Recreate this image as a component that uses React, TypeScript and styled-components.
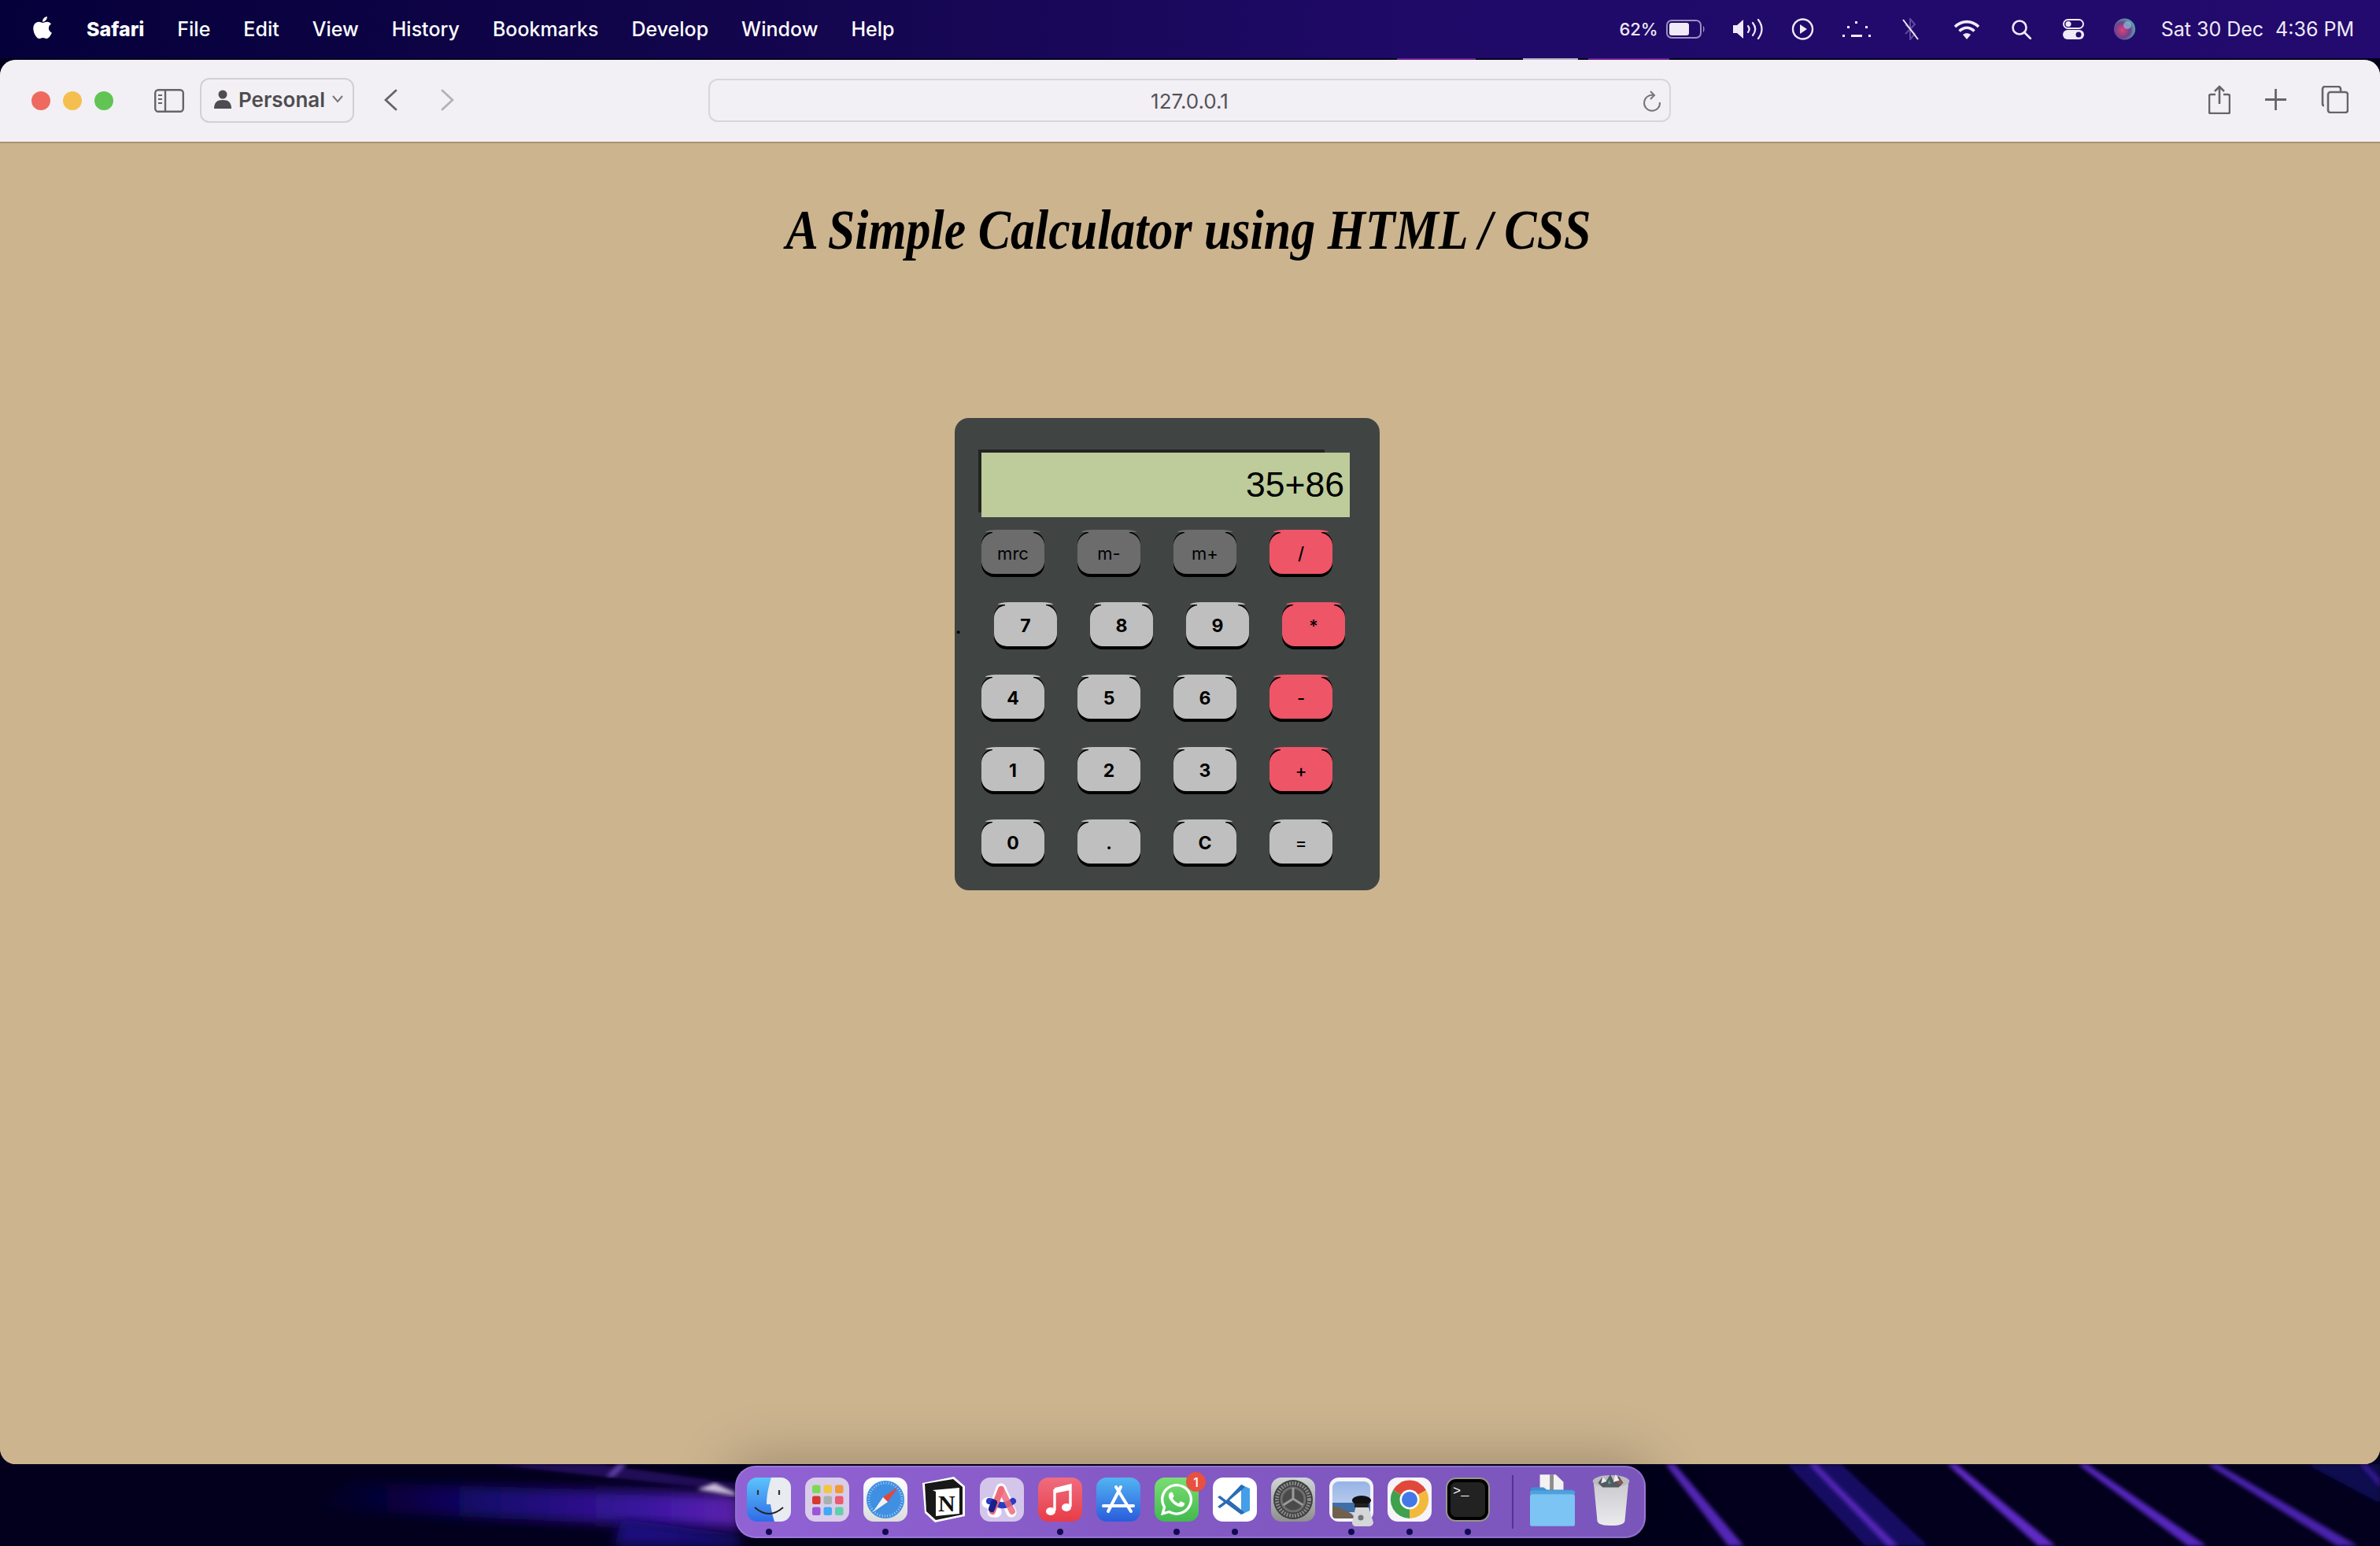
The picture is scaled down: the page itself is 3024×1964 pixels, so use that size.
import React from 'react';
import styled, {createGlobalStyle} from 'styled-components';
import {FaApple, FaWhatsapp} from 'react-icons/fa';

const GlobalStyle = createGlobalStyle`
    html, body{
        margin:0;
        padding:0;
        background:#02001e;
    }
`;

const Desktop = styled.div`
    position:relative;
    width:3024px;
    height:1964px;
    overflow:hidden;
    display:flex;
    flex-direction:column;
    font-family:Inter, "Liberation Sans", sans-serif;
`;

const Wallpaper = styled.svg`
    position:absolute;
    left:0;
    top:0;
`;

const MenuBar = styled.header`
    position:relative;
    height:74px;
    flex:none;
    display:flex;
    align-items:center;
    justify-content:space-between;
    padding:0 33px 0 38px;
    background:linear-gradient(90deg, #05003a 0%, #14064f 35%, #1f0a68 60%, #230a6e 100%);
    color:#fff;
    font-size:25px;
`;

const MenuLeft = styled.nav`
    display:flex;
    align-items:center;
    gap:42px;
    font-weight:500;
`;

const AppName = styled.b`
    font-weight:800;
    margin-left:-2px;
`;

const MenuRight = styled.div`
    display:flex;
    align-items:center;
    gap:38px;
    color:#efeaf6;
`;

const StatusSlot = styled.span<{$nudge:number}>`
    display:flex;
    margin-left:${(props) => props.$nudge}px;
`;

const BatteryGroup = styled.div`
    display:flex;
    align-items:center;
    gap:10px;
    font-size:22px;
    font-weight:500;
`;

const Clock = styled.div`
    display:flex;
    gap:15px;
    font-size:25px;
    margin-left:-5px;
`;

const BrowserWindow = styled.main`
    position:relative;
    flex:none;
    margin-top:2px;
    height:1784px;
    border-radius:20px;
    overflow:hidden;
    display:flex;
    flex-direction:column;
    background:#ccb48f;
`;

const Toolbar = styled.div`
    height:104px;
    flex:none;
    display:flex;
    align-items:center;
    padding:0 40px 0 40px;
    background:#f2f0f5;
    border-bottom:2px solid #a8916e;
`;

const Lights = styled.div`
    display:flex;
    gap:16px;
    margin-right:52px;
`;

const Light = styled.span<{$color:string}>`
    width:24px;
    height:24px;
    border-radius:50%;
    background:${(props) => props.$color};
`;

const ProfileButton = styled.div`
    box-sizing:border-box;
    width:196px;
    height:57px;
    margin:-2px 0 0 20px;
    display:flex;
    align-items:center;
    padding:0 0 2px 16px;
    gap:9px;
    border:2px solid #d2d0d4;
    border-radius:12px;
    font-size:26px;
    font-weight:600;
    color:#4e4c50;
`;

const NavButtons = styled.div`
    display:flex;
    gap:55px;
    margin:-2px 0 0 38px;
`;

const AddressBar = styled.div`
    position:absolute;
    left:900px;
    top:24px;
    box-sizing:border-box;
    width:1223px;
    height:55px;
    padding-top:2px;
    display:flex;
    align-items:center;
    justify-content:center;
    border:2px solid #d8d6da;
    border-radius:12px;
    font-size:26px;
    color:#555357;
`;

const ReloadSlot = styled.span`
    position:absolute;
    right:10px;
    top:13px;
    display:flex;
`;

const ToolbarRight = styled.div`
    margin:-4px 0 0 auto;
    display:flex;
    align-items:center;
    gap:44px;
`;

const Page = styled.section`
    flex:1;
    background:#ccb48f;
`;

const Title = styled.h1`
    margin:70px 0 0;
    height:100px;
    text-align:center;
    font-family:"Liberation Serif", serif;
    font-style:italic;
    font-weight:700;
    font-size:72px;
    line-height:80px;
    color:#000;
    transform:translateX(-2px) scaleX(0.86);
`;

const Calculator = styled.div`
    position:relative;
    z-index:0;
    box-sizing:border-box;
    width:540px;
    height:600px;
    margin:179px 0 0 1213px;
    padding:44px 0 0 34px;
    border-radius:18px;
    background:#404544;
`;

const Display = styled.div`
    position:relative;
    box-sizing:border-box;
    width:468px;
    height:82px;
    padding-right:7px;
    display:flex;
    align-items:center;
    justify-content:flex-end;
    background:#bdcc9a;
    font-family:"Liberation Sans", Arial, sans-serif;
    font-size:44.5px;
    color:#000;

    &::before{
        content:"";
        position:absolute;
        z-index:-1;
        left:-4px;
        top:-4px;
        width:440px;
        height:80px;
        background:#222423;
    }
`;

const Keypad = styled.div`
    margin-top:20px;
    display:flex;
    flex-direction:column;
    gap:40px;
`;

const KeyRow = styled.div<{$shifted?:boolean}>`
    position:relative;
    display:flex;
    gap:42px;
    padding-left:${(props) => (props.$shifted ? '16px' : '0')};
`;

const StrayDot = styled.span`
    position:absolute;
    left:-33px;
    top:15px;
    font-size:22px;
    line-height:26px;
    font-weight:700;
    color:#000;
`;

const toneColors = {
    num:'#bfbfbf',
    mem:'#6c6c6c',
    op:'#ee5567',
    eq:'#bfbfbf',
};

type Tone = keyof typeof toneColors;

const Key = styled.button<{$tone:Tone}>`
    position:relative;
    width:80px;
    height:52px;
    padding:0;
    border:none;
    border-radius:16px;
    background:${(props) => toneColors[props.$tone]};
    box-shadow:0 4px 0 #000, 0 -2px 0 #000;
    font-family:Inter, "Liberation Sans", sans-serif;
    font-size:${(props) => (props.$tone === 'num' ? '23px' : '22px')};
    font-weight:${(props) => (props.$tone === 'num' ? 700 : props.$tone === 'mem' ? 400 : 500)};
    color:#000;

    &::before{
        content:"";
        position:absolute;
        left:14px;
        right:14px;
        top:-2px;
        height:3px;
        background:${(props) => toneColors[props.$tone]};
    }

    &::after{
        content:"";
        position:absolute;
        left:5px;
        right:5px;
        top:-4px;
        height:3px;
        border-radius:14px 14px 0 0 / 3px 3px 0 0;
        background:${(props) => toneColors[props.$tone]};
    }
`;

const DockZone = styled.footer`
    position:relative;
    z-index:2;
    flex:1;
    padding:2px 0 0 934px;
`;

const Dock = styled.div`
    box-sizing:border-box;
    width:1157px;
    height:92px;
    display:flex;
    padding:13px 0 0 13px;
    gap:18px;
    border:2px solid rgba(190,160,235,.35);
    border-radius:26px;
    background:linear-gradient(90deg, #9162d4 0%, #8459c4 45%, #7a56bb 100%);
    box-shadow:0 0 70px 10px rgba(0,0,0,.22);
`;

const DockItem = styled.div<{$width?:number}>`
    position:relative;
    width:${(props) => props.$width ?? 56}px;
    height:56px;
    flex:none;
`;

const RunningDot = styled.span`
    position:absolute;
    left:24px;
    top:65px;
    width:8px;
    height:8px;
    border-radius:50%;
    background:#120a50;
`;

const Badge = styled.span`
    position:absolute;
    right:-9px;
    top:-7px;
    width:25px;
    height:25px;
    display:flex;
    align-items:center;
    justify-content:center;
    border-radius:50%;
    background:#e8503f;
    color:#fff;
    font-size:16px;
    font-weight:500;
`;

const WhatsappTile = styled.div`
    width:56px;
    height:56px;
    display:flex;
    align-items:center;
    justify-content:center;
    border-radius:13px;
    background:linear-gradient(180deg, #7ade72, #42b94e);
    color:#fff;
`;

const DockDivider = styled.span`
    width:2px;
    height:68px;
    flex:none;
    margin:-3px 3px 0 10px;
    background:#53309a;
`;

const TerminalPrompt = styled.text`
    font-family:"Liberation Mono", monospace;
    font-size:17px;
    fill:#fff;
`;

const NotionLetter = styled.text`
    font-family:"Liberation Serif", serif;
    font-weight:700;
    font-size:30px;
    fill:#111;
`;

const WallpaperArt = () => (
    <Wallpaper width={3024} height={1964} viewBox="0 0 3024 1964">
        <defs>
            <linearGradient id="bandLeft" x1="0" y1="0" x2="1" y2="0">
                <stop offset="0" stopColor="#07004a" stopOpacity="0" />
                <stop offset="0.4" stopColor="#14086a" />
                <stop offset="0.8" stopColor="#3c16a0" />
                <stop offset="1" stopColor="#6426bc" />
            </linearGradient>
            <filter id="soft"><feGaussianBlur stdDeviation="2.5" /></filter>
            <filter id="softer"><feGaussianBlur stdDeviation="8" /></filter>
        </defs>
        <rect width="3024" height="1964" fill="#02001c" />
        <polygon points="383,1917 446,1883 940,1898 940,1943" fill="url(#bandLeft)" filter="url(#softer)" />
        <polygon points="790,1930 940,1950 940,1964 780,1964" fill="#1e0c80" filter="url(#softer)" />
        <polygon points="620,1860 760,1860 940,1885 940,1895" fill="#200a58" filter="url(#soft)" />
        <polygon points="886,1892 908,1884 934,1896 934,1900" fill="#d8c8e8" filter="url(#soft)" />
        <polygon points="770,1876 785,1860 797,1860 780,1876" fill="#5a3ea0" filter="url(#soft)" />
        <polygon points="2270,1860 2340,1860 2450,1964 2370,1964" fill="#180864" filter="url(#soft)" />
        <polygon points="2116,1860 2128,1860 2216,1964 2196,1964" fill="#5226b4" filter="url(#soft)" />
        <polygon points="2298,1860 2308,1860 2412,1964 2398,1964" fill="#5226b4" filter="url(#soft)" />
        <polygon points="2474,1860 2486,1860 2612,1964 2590,1964" fill="#5e2cc4" filter="url(#soft)" />
        <polygon points="2640,1860 2652,1860 2804,1964 2780,1964" fill="#5428bc" filter="url(#soft)" />
        <polygon points="2804,1860 2818,1860 2996,1964 2970,1964" fill="#4a24ac" filter="url(#soft)" />
        <polygon points="2930,1860 3024,1860 3024,1910" fill="#100850" filter="url(#soft)" />
        <polygon points="2998,1860 3006,1860 3024,1878 3024,1890" fill="#34188e" filter="url(#soft)" />
        <rect x="1775" y="74" width="100" height="2" fill="#6a2090" />
        <rect x="1935" y="74" width="70" height="2" fill="#b8b0c0" />
        <rect x="2018" y="74" width="103" height="2" fill="#6a2090" />
    </Wallpaper>
);

const BatteryIcon = () => (
    <svg width="50" height="24" viewBox="0 0 50 24">
        <rect x="1" y="1" width="43" height="22" rx="6" fill="none" stroke="#9d90c0" strokeWidth="2" />
        <rect x="4" y="4" width="25" height="16" rx="3" fill="#efeaf6" />
        <path d="M47 8c2 1 2 7 0 8z" fill="#9d90c0" />
    </svg>
);

const SpeakerIcon = () => (
    <svg width="39" height="26" viewBox="0 0 39 26" fill="none" stroke="#efeaf6" strokeLinecap="round">
        <path d="M1 8h5l8-7v24l-8-7H1z" fill="#efeaf6" stroke="none" />
        <path d="M20 9c2 2.500 2 5.500 0 8" strokeWidth="2.200" />
        <path d="M26 5c4 5 4 11 0 16" strokeWidth="2.200" />
        <path d="M33 1c6 8 6 16 0 24" strokeWidth="2.200" />
    </svg>
);

const PlayCircleIcon = () => (
    <svg width="29" height="28" viewBox="0 0 29 28">
        <circle cx="14.500" cy="14" r="12.500" fill="none" stroke="#efeaf6" strokeWidth="2.400" />
        <path d="M11 8l9 6-9 6z" fill="#efeaf6" />
    </svg>
);

const DotsIcon = () => (
    <svg width="36" height="20" viewBox="0 0 36 20" fill="#efeaf6">
        <rect x="16" y="0" width="3" height="3" />
        <rect x="6" y="6" width="3" height="3" />
        <rect x="29" y="6" width="3" height="3" />
        <rect x="0" y="17" width="3" height="3" />
        <rect x="11" y="17" width="14" height="3" />
        <rect x="33" y="17" width="3" height="3" />
    </svg>
);

const BluetoothOffIcon = () => (
    <svg width="25" height="28" viewBox="0 0 25 28" fill="none" strokeWidth="2">
        <path d="M6 8l12 12-6 7V1l6 7-12 12" stroke="#5f4b9e" />
        <path d="M3 2l19 25" stroke="#efeaf6" />
    </svg>
);

const WifiIcon = () => (
    <svg width="34" height="25" viewBox="0 0 34 25" fill="none" stroke="#efeaf6" strokeWidth="3.600">
        <path d="M2 9c9-8.500 21-8.500 30 0" />
        <path d="M7.500 14.500c6-5.500 13-5.500 19 0" />
        <path d="M17 25l-5-6c3-2.500 7-2.500 10 0z" fill="#efeaf6" stroke="none" />
    </svg>
);

const SearchIcon = () => (
    <svg width="25" height="25" viewBox="0 0 25 25" fill="none" stroke="#efeaf6" strokeWidth="2.600">
        <circle cx="10" cy="10" r="8.500" />
        <path d="M16 16l8 8" strokeLinecap="round" />
    </svg>
);

const ControlIcon = () => (
    <svg width="27" height="26" viewBox="0 0 27 26">
        <rect x="1" y="1" width="25" height="11" rx="5.500" fill="none" stroke="#efeaf6" strokeWidth="2" />
        <circle cx="7" cy="6.500" r="3.500" fill="#efeaf6" />
        <rect x="0" y="14" width="27" height="12" rx="6" fill="#efeaf6" />
        <circle cx="20" cy="20" r="3.500" fill="#220a6c" />
    </svg>
);

const SiriIcon = () => (
    <svg width="27" height="28" viewBox="0 0 27 28">
        <defs>
            <radialGradient id="siriA" cx="0.4" cy="0.55" r="0.65">
                <stop offset="0" stopColor="#e0407a" />
                <stop offset="0.55" stopColor="#70408e" />
                <stop offset="1" stopColor="#4fc4b8" />
            </radialGradient>
        </defs>
        <circle cx="13.500" cy="14" r="13.500" fill="url(#siriA)" />
        <circle cx="17" cy="9" r="5" fill="#8fd0e8" opacity=".6" />
    </svg>
);

const SidebarIcon = () => (
    <svg width="38" height="30" viewBox="0 0 38 30" fill="none" stroke="#666468" strokeWidth="2.400">
        <rect x="1.200" y="1.200" width="35.600" height="27.600" rx="4" />
        <path d="M14 1v28" />
        <path d="M5 8h5M5 13h5M5 18h5" strokeWidth="2" />
    </svg>
);

const PersonIcon = () => (
    <svg width="22" height="24" viewBox="0 0 22 24" fill="#4e4c50">
        <circle cx="11" cy="6" r="5.500" />
        <path d="M0 24c0-8 4-11 11-11s11 3 11 11z" />
    </svg>
);

const SmallChevron = () => (
    <svg width="14" height="10" viewBox="0 0 14 10" fill="none" stroke="#77757a" strokeWidth="2">
        <path d="M1 1l6 7 6-7" />
    </svg>
);

const NavChevron = ({flip, color}:{flip?:boolean; color:string}) => (
    <svg width="17" height="28" viewBox="0 0 17 28" fill="none" stroke={color} strokeWidth="2.800" strokeLinecap="round" style={flip ? {transform:'scaleX(-1)'} : undefined}>
        <path d="M15 2L2 14l13 12" />
    </svg>
);

const ReloadIcon = () => (
    <svg width="24" height="27" viewBox="0 0 24 27" fill="none" stroke="#77757a" strokeWidth="2">
        <path d="M14 6A10 10 0 1 0 22 15" />
        <path d="M10 1l5 5-5 5" />
    </svg>
);

const ShareIcon = () => (
    <svg width="28" height="37" viewBox="0 0 28 37" fill="none" stroke="#666468" strokeWidth="2.600">
        <path d="M9 12H3a2 2 0 0 0-2 2v20a2 2 0 0 0 2 2h22a2 2 0 0 0 2-2V14a2 2 0 0 0-2-2h-6" />
        <path d="M14 24V2M8 8l6-6 6 6" />
    </svg>
);

const PlusIcon = () => (
    <svg width="27" height="27" viewBox="0 0 27 27" stroke="#666468" strokeWidth="2.800">
        <path d="M13.500 0v27M0 13.500h27" />
    </svg>
);

const TabsIcon = () => (
    <svg width="35" height="35" viewBox="0 0 35 35" fill="none" stroke="#666468" strokeWidth="2.600">
        <path d="M4 25H3a2 2 0 0 1-1-2V4a3 3 0 0 1 3-3h17a3 3 0 0 1 3 3v3" />
        <rect x="9" y="8" width="25" height="26" rx="3" />
    </svg>
);

const FinderIcon = () => (
    <svg width="56" height="56" viewBox="0 0 56 56">
        <defs>
            <linearGradient id="finderBlue" x1="0" y1="0" x2="0" y2="1">
                <stop offset="0" stopColor="#5cc4fa" />
                <stop offset="1" stopColor="#2f6ce8" />
            </linearGradient>
        </defs>
        <rect width="56" height="56" rx="13" fill="url(#finderBlue)" />
        <path d="M31 0H43a13 13 0 0 1 13 13V43a13 13 0 0 1-13 13H35C32 47 31 40 30 34H25C25 22 28 10 31 0Z" fill="#e8ebf0" />
        <path d="M14 16v6M41 16v6" stroke="#333" strokeWidth="2.200" />
        <path d="M10 38Q28 54 46 38" fill="none" stroke="#222" strokeWidth="1.800" />
    </svg>
);

const launchColors = ['#7ed957', '#f4c542', '#ee9a3a', '#d5382d', '#a9b0b0', '#ea5a70', '#9b55d8', '#41a9f5', '#5fd0a8'];

const LaunchpadIcon = () => (
    <svg width="56" height="56" viewBox="0 0 56 56">
        <rect width="56" height="56" rx="13" fill="#d9cde9" />
        {launchColors.map((c, i) => (
            <rect key={c} x={9 + (i % 3) * 14.500} y={9.500 + Math.floor(i / 3) * 14} width="10.500" height="10.500" rx="2.500" fill={c} />
        ))}
    </svg>
);

const SafariIcon = () => (
    <svg width="56" height="56" viewBox="0 0 56 56">
        <defs>
            <linearGradient id="safariTile" x1="0" y1="0" x2="0" y2="1">
                <stop offset="0" stopColor="#fff" />
                <stop offset="1" stopColor="#dcdcdc" />
            </linearGradient>
        </defs>
        <rect width="56" height="56" rx="13" fill="url(#safariTile)" />
        <circle cx="28" cy="28" r="24" fill="#3f8fe2" />
        <circle cx="28" cy="28" r="21" fill="none" stroke="#cfe3f7" strokeWidth="3" strokeDasharray="0.700 2.600" />
        <polygon points="44,12 31,31 25,25" fill="#e5463a" />
        <polygon points="12,44 25,25 31,31" fill="#f2f2f2" />
    </svg>
);

const NotionIcon = () => (
    <svg width="56" height="60" viewBox="0 0 56 60" style={{marginTop:-1}}>
        <polygon points="1,8 41,0 55,12 55,50 17,58 4,46" fill="#fff" />
        <polygon points="4,9 40,3 52,13 52,48 18,55 6,44" fill="#181818" />
        <polygon points="14,17 48,14 48,47 18,50 18,19" fill="#fff" />
        <NotionLetter x="21" y="44">N</NotionLetter>
    </svg>
);

const ArcIcon = () => (
    <svg width="56" height="56" viewBox="0 0 56 56">
        <rect width="56" height="56" rx="13" fill="#d3c6ea" />
        <path d="M9 32c6-3 8 14 12 12" fill="none" stroke="#fff" strokeWidth="13" strokeLinecap="round" />
        <path d="M27 14L40 44" fill="none" stroke="#fff" strokeWidth="13" strokeLinecap="round" />
        <path d="M27 14L16 44" fill="none" stroke="#fff" strokeWidth="13" strokeLinecap="round" />
        <path d="M12 30c8 0 14 12 30 0" fill="none" stroke="#2a3cc0" strokeWidth="8" strokeLinecap="round" />
        <path d="M16 43L27 15" fill="none" stroke="#ee6a7a" strokeWidth="8" strokeLinecap="round" />
        <path d="M27 15L41 43" fill="none" stroke="#ee6a7a" strokeWidth="8" strokeLinecap="round" opacity=".85" />
        <path d="M15 40l3-8" fill="none" stroke="#18208a" strokeWidth="8" strokeLinecap="round" />
    </svg>
);

const MusicIcon = () => (
    <svg width="56" height="56" viewBox="0 0 56 56">
        <defs>
            <linearGradient id="musicTile" x1="0" y1="0" x2="0" y2="1">
                <stop offset="0" stopColor="#ef6d80" />
                <stop offset="1" stopColor="#e83c46" />
            </linearGradient>
        </defs>
        <rect width="56" height="56" rx="13" fill="url(#musicTile)" />
        <path d="M21 15l20-5v27" fill="none" stroke="#fff" strokeWidth="3.400" />
        <path d="M21 15v27" stroke="#fff" strokeWidth="3.400" />
        <path d="M21 14l20-4v6l-20 4z" fill="#fff" />
        <ellipse cx="16" cy="43" rx="6" ry="5" fill="#fff" />
        <ellipse cx="36" cy="38" rx="6" ry="5" fill="#fff" />
    </svg>
);

const AppStoreIcon = () => (
    <svg width="56" height="56" viewBox="0 0 56 56">
        <defs>
            <linearGradient id="storeTile" x1="0" y1="0" x2="0" y2="1">
                <stop offset="0" stopColor="#52b4f2" />
                <stop offset="1" stopColor="#2a5cdc" />
            </linearGradient>
        </defs>
        <rect width="56" height="56" rx="13" fill="url(#storeTile)" />
        <g stroke="#fff" strokeWidth="4" strokeLinecap="round" fill="none">
            <path d="M31 12L15 43" />
            <path d="M25 12l19 31" />
            <path d="M9 36h38" />
        </g>
    </svg>
);

const VscodeIcon = () => (
    <svg width="56" height="56" viewBox="0 0 56 56">
        <rect width="56" height="56" rx="13" fill="#fff" />
        <path d="M36 9l11 5v28l-11 5z" fill="#459ee8" />
        <path d="M36 9L17 29l-8-6-3 2 8 6-8 6 3 2 8-6 19 14 4-2V44L21 29 40 13V11z" fill="#2a6cb4" />
    </svg>
);

const SettingsIcon = () => (
    <svg width="56" height="56" viewBox="0 0 56 56">
        <defs>
            <linearGradient id="settingsTile" x1="0" y1="0" x2="0" y2="1">
                <stop offset="0" stopColor="#cfd6d6" />
                <stop offset="1" stopColor="#8e8e8e" />
            </linearGradient>
        </defs>
        <rect width="56" height="56" rx="13" fill="url(#settingsTile)" />
        <circle cx="28" cy="28" r="25" fill="#3e3e3e" />
        <circle cx="28" cy="28" r="20.500" fill="none" stroke="#8a8a8a" strokeWidth="5" strokeDasharray="2 1.500" />
        <circle cx="28" cy="28" r="15" fill="#4a4a4a" stroke="#6f6f6f" strokeWidth="3" />
        <path d="M28 27V13M28 27L15.500 35M28 27L40.500 35" stroke="#9a9a9a" strokeWidth="3" />
    </svg>
);

const PreviewIcon = () => (
    <svg width="60" height="70" viewBox="0 0 60 70">
        <defs>
            <linearGradient id="previewSky" x1="0" y1="0" x2="0" y2="1">
                <stop offset="0" stopColor="#96b4e8" />
                <stop offset="1" stopColor="#cfd8ec" />
            </linearGradient>
        </defs>
        <rect width="56" height="56" rx="12" fill="#f4f3f6" />
        <rect x="4" y="5" width="48" height="47" rx="8" fill="url(#previewSky)" />
        <rect x="4" y="32" width="48" height="12" fill="#3f6fa8" />
        <path d="M4 36l14 4 10 6 6 6H8a4 4 0 0 1-4-4z" fill="#706050" />
        <path d="M34 28h14l1 7 7 22c0 3-3 5-6 5H34c-3 0-5-2-5-5l5-22z" fill="#d4d6d8" />
        <ellipse cx="41" cy="29" rx="12" ry="6" fill="#111" />
        <rect x="32" y="33" width="18" height="5" fill="#222" />
        <circle cx="40" cy="51" r="3.500" fill="#6f7478" />
    </svg>
);

const ChromeIcon = () => (
    <svg width="56" height="56" viewBox="0 0 56 56">
        <rect width="56" height="56" rx="13" fill="#f5f4fa" />
        <path d="M28 28L7 16A24 24 0 0 1 49 16Z" fill="#e0483a" />
        <path d="M28 28L7 16A24 24 0 0 0 28 52Z" fill="#3fa04e" />
        <path d="M28 28L49 16A24 24 0 0 1 28 52Z" fill="#f3b93c" />
        <circle cx="28" cy="28" r="12.500" fill="#fff" />
        <circle cx="28" cy="28" r="10" fill="#4478e6" />
    </svg>
);

const TerminalIcon = () => (
    <svg width="56" height="56" viewBox="0 0 56 56">
        <rect width="56" height="56" rx="13" fill="#97968c" />
        <rect x="2" y="2" width="52" height="52" rx="11" fill="#000" />
        <rect x="6" y="6" width="44" height="44" rx="7" fill="#222" />
        <TerminalPrompt x="9" y="22">&gt;_</TerminalPrompt>
    </svg>
);

const FolderIcon = () => (
    <svg width="58" height="66" viewBox="0 0 60 68" style={{marginTop:-4}}>
        <path d="M13 0h21l10 10v24H13z" fill="#f2f2f2" />
        <rect x="26" y="0" width="5" height="30" fill="#8d8d8d" />
        <path d="M1 20a3 3 0 0 1 3-3h14l4 3h32a3 3 0 0 1 3 3v10H1z" fill="#3e8fd0" />
        <rect x="0" y="21" width="59" height="6" rx="2" fill="#4fa0dc" />
        <path d="M0 29a3 3 0 0 1 3-3h53a3 3 0 0 1 3 3v36a3 3 0 0 1-3 3H3a3 3 0 0 1-3-3z" fill="#7cc4f4" />
    </svg>
);

const TrashIcon = () => (
    <svg width="50" height="66" viewBox="0 0 50 68" style={{marginTop:-5}}>
        <defs>
            <linearGradient id="trashCup" x1="0" y1="0" x2="0" y2="1">
                <stop offset="0" stopColor="#c9c9ce" />
                <stop offset="1" stopColor="#ebebed" />
            </linearGradient>
        </defs>
        <path d="M2 10l5 52c1 4 6 6 18 6s17-2 18-6l5-52z" fill="url(#trashCup)" />
        <ellipse cx="25" cy="10" rx="24" ry="8" fill="#bcbcc0" />
        <path d="M8 12l6-8 4 7 6-10 5 10 6-8 6 9-6 6H14z" fill="#555a60" />
        <path d="M14 4l5 6-7 3zM31 1l5 8-8 2z" fill="#eee" />
        <path d="M22 8l3 5-4 1z" fill="#39b0a0" />
        <path d="M36 8l4 5-6 1z" fill="#b0503c" />
    </svg>
);

const menuItems = ['File', 'Edit', 'View', 'History', 'Bookmarks', 'Develop', 'Window', 'Help'];

// the menu bar icons are not evenly spaced, so each one carries its own nudge
const statusIcons = [
    {name:'speaker', icon:<SpeakerIcon />, nudge:-4},
    {name:'play', icon:<PlayCircleIcon />, nudge:-2},
    {name:'dots', icon:<DotsIcon />, nudge:-2},
    {name:'bluetooth', icon:<BluetoothOffIcon />, nudge:0},
    {name:'wifi', icon:<WifiIcon />, nudge:4},
    {name:'search', icon:<SearchIcon />, nudge:2},
    {name:'control', icon:<ControlIcon />, nudge:2},
    {name:'siri', icon:<SiriIcon />, nudge:0},
];

const keyRows:{label:string; tone:Tone}[][] = [
    [{label:'mrc', tone:'mem'}, {label:'m-', tone:'mem'}, {label:'m+', tone:'mem'}, {label:'/', tone:'op'}],
    [{label:'7', tone:'num'}, {label:'8', tone:'num'}, {label:'9', tone:'num'}, {label:'*', tone:'op'}],
    [{label:'4', tone:'num'}, {label:'5', tone:'num'}, {label:'6', tone:'num'}, {label:'-', tone:'op'}],
    [{label:'1', tone:'num'}, {label:'2', tone:'num'}, {label:'3', tone:'num'}, {label:'+', tone:'op'}],
    [{label:'0', tone:'num'}, {label:'.', tone:'num'}, {label:'C', tone:'num'}, {label:'=', tone:'eq'}],
];

const dockApps = [
    {name:'finder', icon:<FinderIcon />, running:true},
    {name:'launchpad', icon:<LaunchpadIcon />},
    {name:'safari', icon:<SafariIcon />, running:true},
    {name:'notion', icon:<NotionIcon />},
    {name:'arc', icon:<ArcIcon />},
    {name:'music', icon:<MusicIcon />, running:true},
    {name:'appstore', icon:<AppStoreIcon />},
    {name:'whatsapp', icon:<WhatsappTile><FaWhatsapp size={46} /></WhatsappTile>, running:true, badge:'1'},
    {name:'vscode', icon:<VscodeIcon />, running:true},
    {name:'settings', icon:<SettingsIcon />},
    {name:'preview', icon:<PreviewIcon />, running:true},
    {name:'chrome', icon:<ChromeIcon />, running:true},
    {name:'terminal', icon:<TerminalIcon />, running:true},
];

export default function App(){
    return(
        <Desktop>
            <GlobalStyle />
            <WallpaperArt />
            <MenuBar>
                <MenuLeft>
                    <FaApple size={32} style={{marginTop:-4}} />
                    <AppName>Safari</AppName>
                    {menuItems.map((item) => <span key={item}>{item}</span>)}
                </MenuLeft>
                <MenuRight>
                    <BatteryGroup>62%<BatteryIcon /></BatteryGroup>
                    {statusIcons.map((s) => <StatusSlot key={s.name} $nudge={s.nudge}>{s.icon}</StatusSlot>)}
                    <Clock><span>Sat 30 Dec</span><span>4:36 PM</span></Clock>
                </MenuRight>
            </MenuBar>
            <BrowserWindow>
                <Toolbar>
                    <Lights>
                        <Light $color="#ef6a5e" />
                        <Light $color="#f5bf4f" />
                        <Light $color="#61c454" />
                    </Lights>
                    <SidebarIcon />
                    <ProfileButton>
                        <PersonIcon />
                        Personal
                        <SmallChevron />
                    </ProfileButton>
                    <NavButtons>
                        <NavChevron color="#666468" />
                        <NavChevron flip color="#b3b1b5" />
                    </NavButtons>
                    <AddressBar>
                        127.0.0.1
                        <ReloadSlot><ReloadIcon /></ReloadSlot>
                    </AddressBar>
                    <ToolbarRight>
                        <ShareIcon />
                        <PlusIcon />
                        <TabsIcon />
                    </ToolbarRight>
                </Toolbar>
                <Page>
                    <Title>A Simple Calculator using HTML / CSS</Title>
                    <Calculator>
                        <Display>35+86</Display>
                        <Keypad>
                            {keyRows.map((row, i) => (
                                <KeyRow key={row[0].label} $shifted={i === 1}>
                                    {i === 1 ? <StrayDot>.</StrayDot> : null}
                                    {row.map((k) => <Key key={k.label} $tone={k.tone}>{k.label}</Key>)}
                                </KeyRow>
                            ))}
                        </Keypad>
                    </Calculator>
                </Page>
            </BrowserWindow>
            <DockZone>
                <Dock>
                    {dockApps.map((app) => (
                        <DockItem key={app.name}>
                            {app.icon}
                            {app.running ? <RunningDot /> : null}
                            {app.badge ? <Badge>{app.badge}</Badge> : null}
                        </DockItem>
                    ))}
                    <DockDivider />
                    <DockItem $width={60}><FolderIcon /></DockItem>
                    <DockItem $width={50}><TrashIcon /></DockItem>
                </Dock>
            </DockZone>
        </Desktop>
    )
}
